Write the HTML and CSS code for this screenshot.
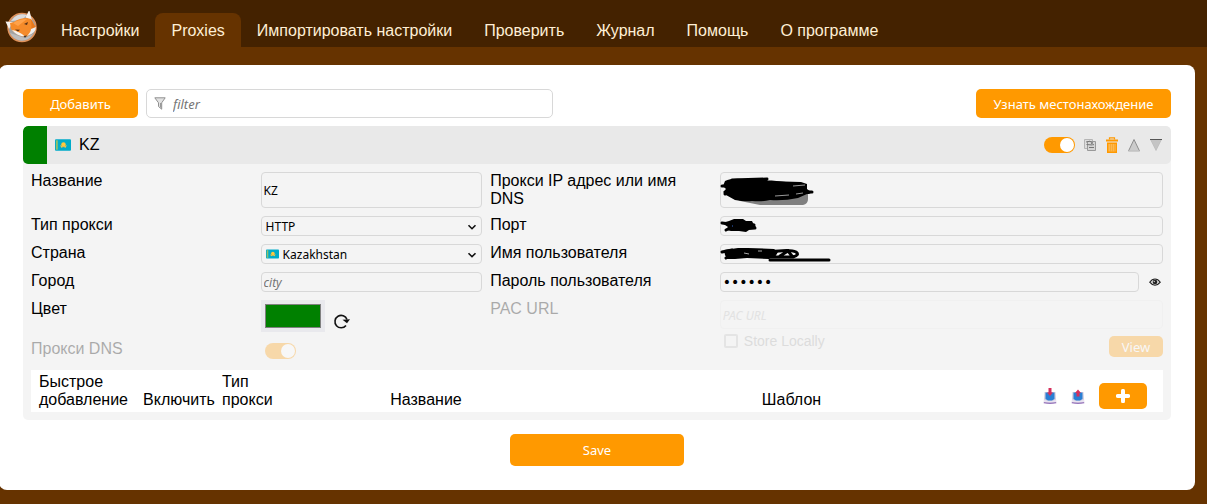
FILE: index.html
```html
<!DOCTYPE html>
<html lang="ru">
<head>
<meta charset="utf-8">
<title>FoxyProxy</title>
<link rel="stylesheet" href="styles.css">
</head>
<body>
<svg class="defs" aria-hidden="true">
  <symbol id="flag" viewBox="0 0 17 12">
    <rect width="17" height="12" rx="1" fill="#00abc9"/>
    <rect x="1" y="1" width="2" height="10" fill="#8fbf6a"/>
    <circle cx="9" cy="5.500" r="2.400" fill="#ffc83d"/>
    <path d="M5.500 6l3 1.500h1l3-1.500-1 3-2.500-1-2.500 1z" fill="#f2c24a"/>
  </symbol>
  <symbol id="chevron" viewBox="0 0 10 6">
    <path d="M1.500 1.200L5 4.700l3.500-3.500" fill="none" stroke="#111" stroke-width="1.600"/>
  </symbol>
  <symbol id="tray" viewBox="0 0 14 16">
    <path d="M1.500 4h11l.8 10.500q-6.300 2-12.600 0z" fill="#d5d0e0"/>
    <path d="M2.500 4.500h9v6.500l-2.500 1.500H5L2.500 11z" fill="#2a7fd4"/>
    <path d="M1 11.500l3.500 1.500h5l3.500-1.500v2.500H1z" fill="#e9e3f1"/>
    <path d="M.8 14.600q6.200 1.600 12.400 0" fill="none" stroke="#9a78bd" stroke-width="1.200"/>
  </symbol>
</svg>

<header class="topbar">
  <svg class="logo" viewBox="0 0 32 32" role="img" aria-label="FoxyProxy">
    <circle cx="17" cy="16.500" r="14" fill="#a2a2a2" stroke="#e0925a" stroke-width="1.500"/>
    <path d="M6 10A13 13 0 0 1 22 4L17 9z" fill="#dcdcdc"/>
    <path d="M5 22A13 13 0 0 0 28 23L20 27z" fill="#bdbdbd"/>
    <path d="M.5 10.500L8 11l-4 7z" fill="#f6f1ec"/>
    <path d="M21.500 6L24 1l2 7.500z" fill="#f6f1ec" stroke="#f6f1ec" stroke-width="1.500"/>
    <path d="M5 12l4-1Q14 7 22 7l4 1 5 9q-2 5-10 9-9-1-15-8z" fill="#f58b2a"/>
    <path d="M8 12q7-4 14-4l-9 7z" fill="#ffa24a"/>
    <path d="M26 8l5 9-5 4q1-6 0-13z" fill="#e9791c"/>
    <path d="M7 19q7 1 13 6.500-8-.5-13-6.500z" fill="#f7f2ec"/>
    <path d="M31 16q0 6-9 9 4-4 4-7z" fill="#eee"/>
    <path d="M10 18.500l5 .3-2 1.700zM19 13l4-2-1 3z" fill="#553018"/>
    <path d="M18.500 25l3.500-.5-2 2.300z" fill="#333"/>
  </svg>
  <nav class="tabs">
    <a class="tab" href="#options">Настройки</a>
    <a class="tab tab-active" href="#proxies" aria-current="page">Proxies</a>
    <a class="tab" href="#import">Импортировать настройки</a>
    <a class="tab" href="#tester">Проверить</a>
    <a class="tab" href="#log">Журнал</a>
    <a class="tab" href="#help">Помощь</a>
    <a class="tab" href="#about">О программе</a>
  </nav>
</header>

<main class="page">
  <div class="toolbar">
    <button class="button add" type="button">Добавить</button>
    <div class="filter">
      <svg class="filter-icon" viewBox="0 0 12 13" aria-hidden="true">
        <path d="M.8.8h10.400L7.700 5.800v6.400L4.500 9.500V5.800z" fill="#e2e2e2" stroke="#909090"/>
        <path d="M6 6h1.500v5.500L6 10z" fill="#999"/>
      </svg>
      <input class="filter-input" type="search" placeholder="filter" aria-label="filter">
    </div>
    <button class="button locate" type="button">Узнать местонахождение</button>
  </div>

  <section class="proxy">
    <div class="summary">
      <span class="swatch"></span>
      <svg class="flag" aria-hidden="true"><use href="#flag"/></svg>
      <span class="proxy-name">KZ</span>
      <div class="actions">
        <input class="toggle" type="checkbox" checked aria-label="Включить">
        <button class="icon-button" type="button" aria-label="Duplicate">
          <svg class="icon" viewBox="0 0 14 14"><path d="M1.500 1.500h8v9h-8z" fill="#ddd" stroke="#b5b5b5"/><path d="M4.500 3.500h8v9h-8z" fill="#d5d5d5" stroke="#999"/><path d="M3 4q4-2 7 1M3.500 6.500l6 .5M6 9.500h5M8 5l3 2" stroke="#777" fill="none"/></svg>
        </button>
        <button class="icon-button" type="button" aria-label="Delete">
          <svg class="icon icon-tall" viewBox="0 0 14 16"><path d="M1 2.500h12v2H1z" fill="#f90"/><path d="M4.500 2.500V.8h5v1.700" fill="none" stroke="#f90" stroke-width="1.200"/><path d="M2.700 6.200h8.600v9H2.700z" fill="#ffb84d" stroke="#f90" stroke-width="1.400"/><path d="M5.500 7v8M7.500 7v8M9.500 7v8" stroke="#f5a32a" stroke-width=".7"/></svg>
        </button>
        <button class="icon-button" type="button" aria-label="Up">
          <svg class="icon" viewBox="0 0 14 14"><path d="M7 1.500L12.500 13h-11z" fill="#ccc" stroke="#8d8d8d"/><path d="M1.500 13h11" stroke="#ddd"/></svg>
        </button>
        <button class="icon-button" type="button" aria-label="Down">
          <svg class="icon" viewBox="0 0 14 14"><path d="M1.500 1.500h11L7 12.500z" fill="#c4c4c4" stroke="#b5b5b5" stroke-width=".6"/><path d="M1 1.500h12" stroke="#555"/></svg>
        </button>
      </div>
    </div>

    <div class="details">
      <div class="fields">
        <label for="title">Название</label>
        <input class="control" id="title" type="text" value="KZ">
        <label for="host">Прокси IP адрес или имя DNS</label>
        <div class="field">
          <input class="control" id="host" type="text">
          <svg class="scribble" viewBox="0 0 112 36" aria-hidden="true">
            <path d="M8 22l12 7 20 4h43q5-1 5-6v-9z" fill="#808080"/>
            <path d="M7 21l8 6 6-4z" fill="#8a8766"/>
            <path d="M5 9q6-3 18-2h18l6 2 34 1 6 2v5l4 3q0 2-4 2l-9 4q-14 3-28 2-8 2-18 1-7 1-17-1l-9-5-3-3 3-3-3-3z"/>
            <path d="M2 14h8M5 22l10-4M80 20h12M42 9l38 4M12 8l35-1" fill="none" stroke="#000" stroke-width="3" stroke-linecap="round"/>
            <path d="M55 24l14-1M73 14l12-1M76 22l7-1" stroke="#999"/>
          </svg>
        </div>

        <label for="type">Тип прокси</label>
        <div class="field">
          <select class="control" id="type"><option>HTTP</option></select>
          <svg class="chevron" aria-hidden="true"><use href="#chevron"/></svg>
        </div>
        <label for="port">Порт</label>
        <div class="field">
          <input class="control" id="port" type="text">
          <svg class="scribble" viewBox="0 0 112 20" aria-hidden="true">
            <path d="M9 5l5-2h9l3 2h6l2 4q3 1 1 4l-6 1-3 2-7-1H11l-5-1 2-3-6-4z"/>
            <path d="M2 7l8 1M6 14l8-4M24 7l10 2M30 12h5" fill="none" stroke="#000" stroke-width="3" stroke-linecap="round"/>
            <path d="M12 10h1" stroke="#36c"/>
          </svg>
        </div>

        <label for="country">Страна</label>
        <div class="field">
          <select class="control with-flag" id="country"><option>Kazakhstan</option></select>
          <svg class="select-flag" aria-hidden="true"><use href="#flag"/></svg>
          <svg class="chevron" aria-hidden="true"><use href="#chevron"/></svg>
        </div>
        <label for="user">Имя пользователя</label>
        <div class="field">
          <input class="control" id="user" type="text">
          <svg class="scribble" viewBox="0 0 112 20" aria-hidden="true">
            <path d="M4 6l14-2h10l26 1 4 3-3 5-6 2-22-1-12 1H7l-2-4z"/>
            <path d="M2 8l10-2M6 14l6-3M50 8q20-3 26 0 4 3-3 5l-21 0M60 12l8-5 4 5" fill="none" stroke="#000" stroke-width="3" stroke-linecap="round"/>
            <path d="M50 16h59" stroke="#000" stroke-width="3" stroke-linecap="round"/>
            <path d="M24 9l5 1M38 7l4 0" stroke="#aaa"/>
          </svg>
        </div>

        <label for="city">Город</label>
        <input class="control" id="city" type="text" placeholder="city">
        <label for="password">Пароль пользователя</label>
        <div class="password-row">
          <input class="control password" id="password" type="password" value="secret">
          <button class="eye" type="button" aria-label="Show password">
            <svg class="eye-icon" viewBox="0 0 12 8"><path d="M.7 4.200Q3 1 6 1t5.300 3.200Q9 7.200 6 7.200T.7 4.200z" fill="#ddd" stroke="#222" stroke-width="1.100"/><circle cx="6" cy="4" r="2.300" fill="#222"/><circle cx="5.300" cy="3.500" r=".8" fill="#bbb"/></svg>
          </button>
        </div>

        <label for="color">Цвет</label>
        <div class="color-row">
          <input class="color" id="color" type="color" value="#008000">
          <button class="refresh" type="button" aria-label="Random color">
            <svg class="refresh-icon" viewBox="0 0 18 16"><path d="M14 6.500A6.200 6.200 0 1 0 13 12.500" fill="none" stroke="#111" stroke-width="1.600"/><path d="M9.500 6.800l7.500-.5-3 4z" fill="#111"/></svg>
          </button>
        </div>
        <label class="muted" for="pac">PAC URL</label>
        <div class="pac">
          <input class="control pac-input" id="pac" type="url" placeholder="PAC URL" disabled>
          <div class="pac-row">
            <label class="store"><input class="checkbox" type="checkbox" disabled>Store Locally</label>
            <button class="button view" type="button" disabled>View</button>
          </div>
        </div>

        <label class="muted" for="dns">Прокси DNS</label>
        <div class="dns"><input class="toggle" id="dns" type="checkbox" checked disabled></div>
      </div>

      <table class="patterns">
        <colgroup><col class="col-quick"><col class="col-enable"><col class="col-type"><col class="col-title"><col><col class="col-actions"></colgroup>
        <thead>
          <tr>
            <th class="start quick">Быстрое добавление</th>
            <th>Включить</th>
            <th class="start">Тип прокси</th>
            <th>Название</th>
            <th>Шаблон</th>
            <th>
              <div class="pattern-actions">
                <button class="icon-button" type="button" aria-label="Import">
                  <svg class="icon icon-tall" viewBox="0 0 14 16"><use href="#tray"/><path d="M5.500 0h3v4.500H10L7 8 4 4.500h1.500z" fill="#d62f5c"/></svg>
                </button>
                <button class="icon-button" type="button" aria-label="Export">
                  <svg class="icon icon-tall" viewBox="0 0 14 16"><use href="#tray"/><path d="M5.500 8.500h3V5H10L7 1.500 4 5h1.500z" fill="#d62f5c"/></svg>
                </button>
                <button class="button plus" type="button" aria-label="Add pattern">
                  <svg class="icon" viewBox="0 0 14 14"><path d="M7 1.800v10.400M1.800 7h10.400" stroke="#fff" stroke-width="4" stroke-linecap="round"/></svg>
                </button>
              </div>
            </th>
          </tr>
        </thead>
      </table>
    </div>
  </section>

  <button class="button save" type="submit">Save</button>
</main>
</body>
</html>
```

FILE: styles.css
```css
* {
  box-sizing: border-box;
}

body {
  margin: 0;
  background: #630;
  color: #000;
  font: 16px/18px "Liberation Sans", Arial, sans-serif;
}

button,
input,
select {
  margin: 0;
  font: 13px/18px "Noto Sans", sans-serif;
  color: inherit;
}

svg {
  display: block;
}

.defs {
  position: absolute;
  width: 0;
  height: 0;
}

.topbar {
  display: flex;
  align-items: flex-end;
  gap: 8px;
  height: 47px;
  padding-left: 5px;
  background: #420;
}

.logo {
  width: 32px;
  height: 32px;
  margin-bottom: 4px;
}

.tabs {
  display: flex;
}

.tab {
  padding: 9px 16px 7px;
  border-radius: 8px 8px 0 0;
  color: #ffefd5;
  text-decoration: none;
}

.tab-active {
  background: #630;
}

.page {
  display: flex;
  flex-direction: column;
  margin: 18px 12px 14px -1px;
  padding: 24px;
  border-radius: 8px;
  background: #fff;
}

.button {
  padding: 0;
  border: 0;
  border-radius: 5px;
  background: #f90;
  color: #fff;
}

.toolbar {
  display: flex;
  gap: 8px;
  height: 29px;
  margin-bottom: 8px;
}

.add {
  width: 115px;
}

.filter {
  display: flex;
  align-items: center;
  gap: 7px;
  width: 407px;
  padding: 0 8px 0 7px;
  border: 1px solid #d8d8d8;
  border-radius: 5px;
}

.filter-icon {
  width: 12px;
  height: 13px;
}

.filter-input {
  flex: 1;
  min-width: 0;
  padding: 0;
  border: 0;
  outline: 0;
  background: none;
}

::placeholder {
  color: #757575;
  font-style: italic;
}

.locate {
  width: 195px;
  margin-left: auto;
}

.proxy {
  overflow: hidden;
  border-radius: 5px;
  background: #f4f4f4;
}

.summary {
  display: flex;
  align-items: center;
  gap: 8px;
  height: 38px;
  padding-right: 8px;
  border-radius: 5px;
  overflow: hidden;
  background: #e9e9e9;
}

.swatch {
  align-self: stretch;
  width: 24px;
  background: green;
}

.flag {
  width: 16px;
  height: 12px;
}

.actions {
  display: flex;
  align-items: center;
  gap: 8px;
  margin-left: auto;
}

.toggle {
  display: flex;
  justify-content: flex-end;
  width: 31px;
  height: 16px;
  padding: 1px;
  border-radius: 8px;
  appearance: none;
  background: #f90;
}

.toggle::before {
  content: "";
  width: 14px;
  height: 14px;
  border-radius: 50%;
  background: #fff;
}

.toggle:disabled {
  opacity: 0.3;
}

.icon-button,
.refresh,
.eye {
  display: flex;
  align-items: center;
  justify-content: center;
  padding: 0;
  border: 0;
  background: none;
}

.icon {
  width: 14px;
  height: 14px;
}

.icon-tall {
  height: 16px;
}

.details {
  padding: 8px;
}

.fields {
  display: grid;
  grid-template-columns: 1fr 1fr 1fr 2fr;
  grid-template-rows: auto auto auto auto 32px 22px;
  gap: 8px;
}

.field {
  position: relative;
  display: flex;
}

.control {
  width: 100%;
  min-width: 0;
  min-height: 20px;
  padding: 1px 2px 0;
  border: 1px solid #d8d8d8;
  border-radius: 4px;
  background: none;
  appearance: none;
  font-size: 12px;
  line-height: 17px;
}

select.control {
  padding: 1px 4px 0;
}

select.with-flag {
  padding-left: 21px;
}

.password {
  font-family: "DejaVu Sans", sans-serif;
  font-size: 14px;
}

.select-flag {
  position: absolute;
  top: 5px;
  left: 5px;
  width: 13px;
  height: 10px;
  pointer-events: none;
}

.chevron {
  position: absolute;
  top: 8px;
  right: 5px;
  width: 10px;
  height: 6px;
  pointer-events: none;
}

.scribble {
  position: absolute;
  top: 0;
  left: 0;
  width: 112px;
  height: 100%;
  pointer-events: none;
}

.password-row {
  display: flex;
  gap: 8px;
}

.eye {
  flex: none;
  width: 16px;
}

.eye-icon {
  width: 12px;
  height: 8px;
}

.color-row {
  display: flex;
  gap: 8px;
}

.color {
  width: 64px;
  height: 32px;
  padding: 4px;
  border: 0;
  background: #e9e9ed;
}

.color::-webkit-color-swatch-wrapper {
  padding: 0;
}

.color::-webkit-color-swatch {
  border: 1px solid #808080;
}

.refresh {
  align-items: flex-end;
  padding-bottom: 3px;
}

.refresh-icon {
  width: 18px;
  height: 16px;
}

.muted {
  opacity: 0.3;
}

.pac {
  display: flex;
  flex-direction: column;
  grid-row: span 2;
  gap: 7px;
}

.pac-input {
  height: 29px;
  border-color: #f0f0f0;
}

.pac-input::placeholder {
  color: #e2e2e2;
}

.pac-row {
  display: flex;
  justify-content: space-between;
}

.store {
  display: flex;
  align-items: center;
  gap: 6px;
  height: 10px;
  padding-left: 4px;
  color: #dcdcdc;
  font-size: 14px;
}

.checkbox {
  width: 14px;
  height: 14px;
  border: 2px solid #e4e4e4;
  border-radius: 2px;
  appearance: none;
}

.view {
  width: 54px;
  height: 21px;
  opacity: 0.3;
}

.dns {
  padding: 3px 4px;
}

.patterns {
  width: 100%;
  margin-top: 8px;
  border-collapse: collapse;
  table-layout: fixed;
  background: #fff;
}

.patterns th {
  padding: 3px;
  font-weight: normal;
  vertical-align: bottom;
}

.patterns .start {
  text-align: left;
}

.patterns .quick {
  padding-left: 8px;
}

.col-quick {
  width: 108px;
}

.col-enable {
  width: 80px;
}

.col-type {
  width: 57px;
}

.col-title {
  width: 300px;
}

.col-actions {
  width: 156px;
}

.pattern-actions {
  display: flex;
  align-items: center;
  justify-content: flex-end;
  gap: 14px;
  padding-right: 13px;
}

.plus {
  display: grid;
  place-items: center;
  width: 48px;
  height: 26px;
}

.save {
  align-self: center;
  width: 174px;
  height: 32px;
  margin-top: 14px;
}
```
